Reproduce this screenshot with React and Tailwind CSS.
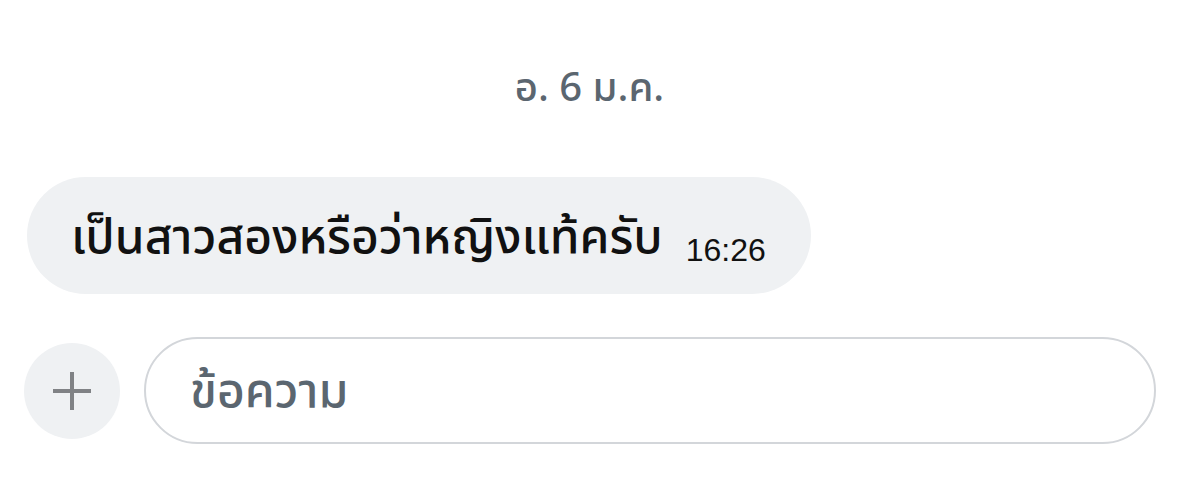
export default function App() {
  const thai = { fontFamily: '"Noto Sans Thai", "Noto Sans", "DejaVu Sans", sans-serif' };
  return (
    <div className="w-[1179px] h-[486px] bg-white flex flex-col overflow-hidden" style={thai}>
      <div className="h-[62px]" />
      <div className="flex justify-center h-[54px] items-center">
        <span className="text-[40px] leading-none font-medium text-[#5b6670]">อ. 6 ม.ค.</span>
      </div>
      <div className="h-[61px]" />
      <div className="pl-[27px] flex">
        <div className="h-[117px] rounded-full bg-[#eff1f3] flex items-center pl-[44px] pr-[45px]">
          <span className="mt-[6px] text-[48px] leading-none font-medium text-[#111] whitespace-nowrap">เป็นสาวสองหรือว่าหญิงแท้ครับ</span>
          <span className="ml-[23px] mt-[28px] text-[32px] leading-none text-[#111]" style={{ fontFamily: '"Liberation Sans", Arial, sans-serif' }}>16:26</span>
        </div>
      </div>
      <div className="h-[43px]" />
      <div className="flex items-center pl-[24px] pr-[23px] gap-[24px]">
        <div className="w-[96px] h-[96px] rounded-full bg-[#eff1f3] flex items-center justify-center shrink-0">
          <svg width="42" height="42" viewBox="0 0 42 42">
            <path d="M21 2v38M2 21h38" stroke="#808285" strokeWidth="4" />
          </svg>
        </div>
        <div className="flex-1 h-[107px] rounded-full border-2 border-[#d3d6da] flex items-center pl-[44px]">
          <span className="mt-[4px] text-[48px] leading-none font-medium text-[#5b6670]">ข้อความ</span>
        </div>
      </div>
    </div>
  );
}
